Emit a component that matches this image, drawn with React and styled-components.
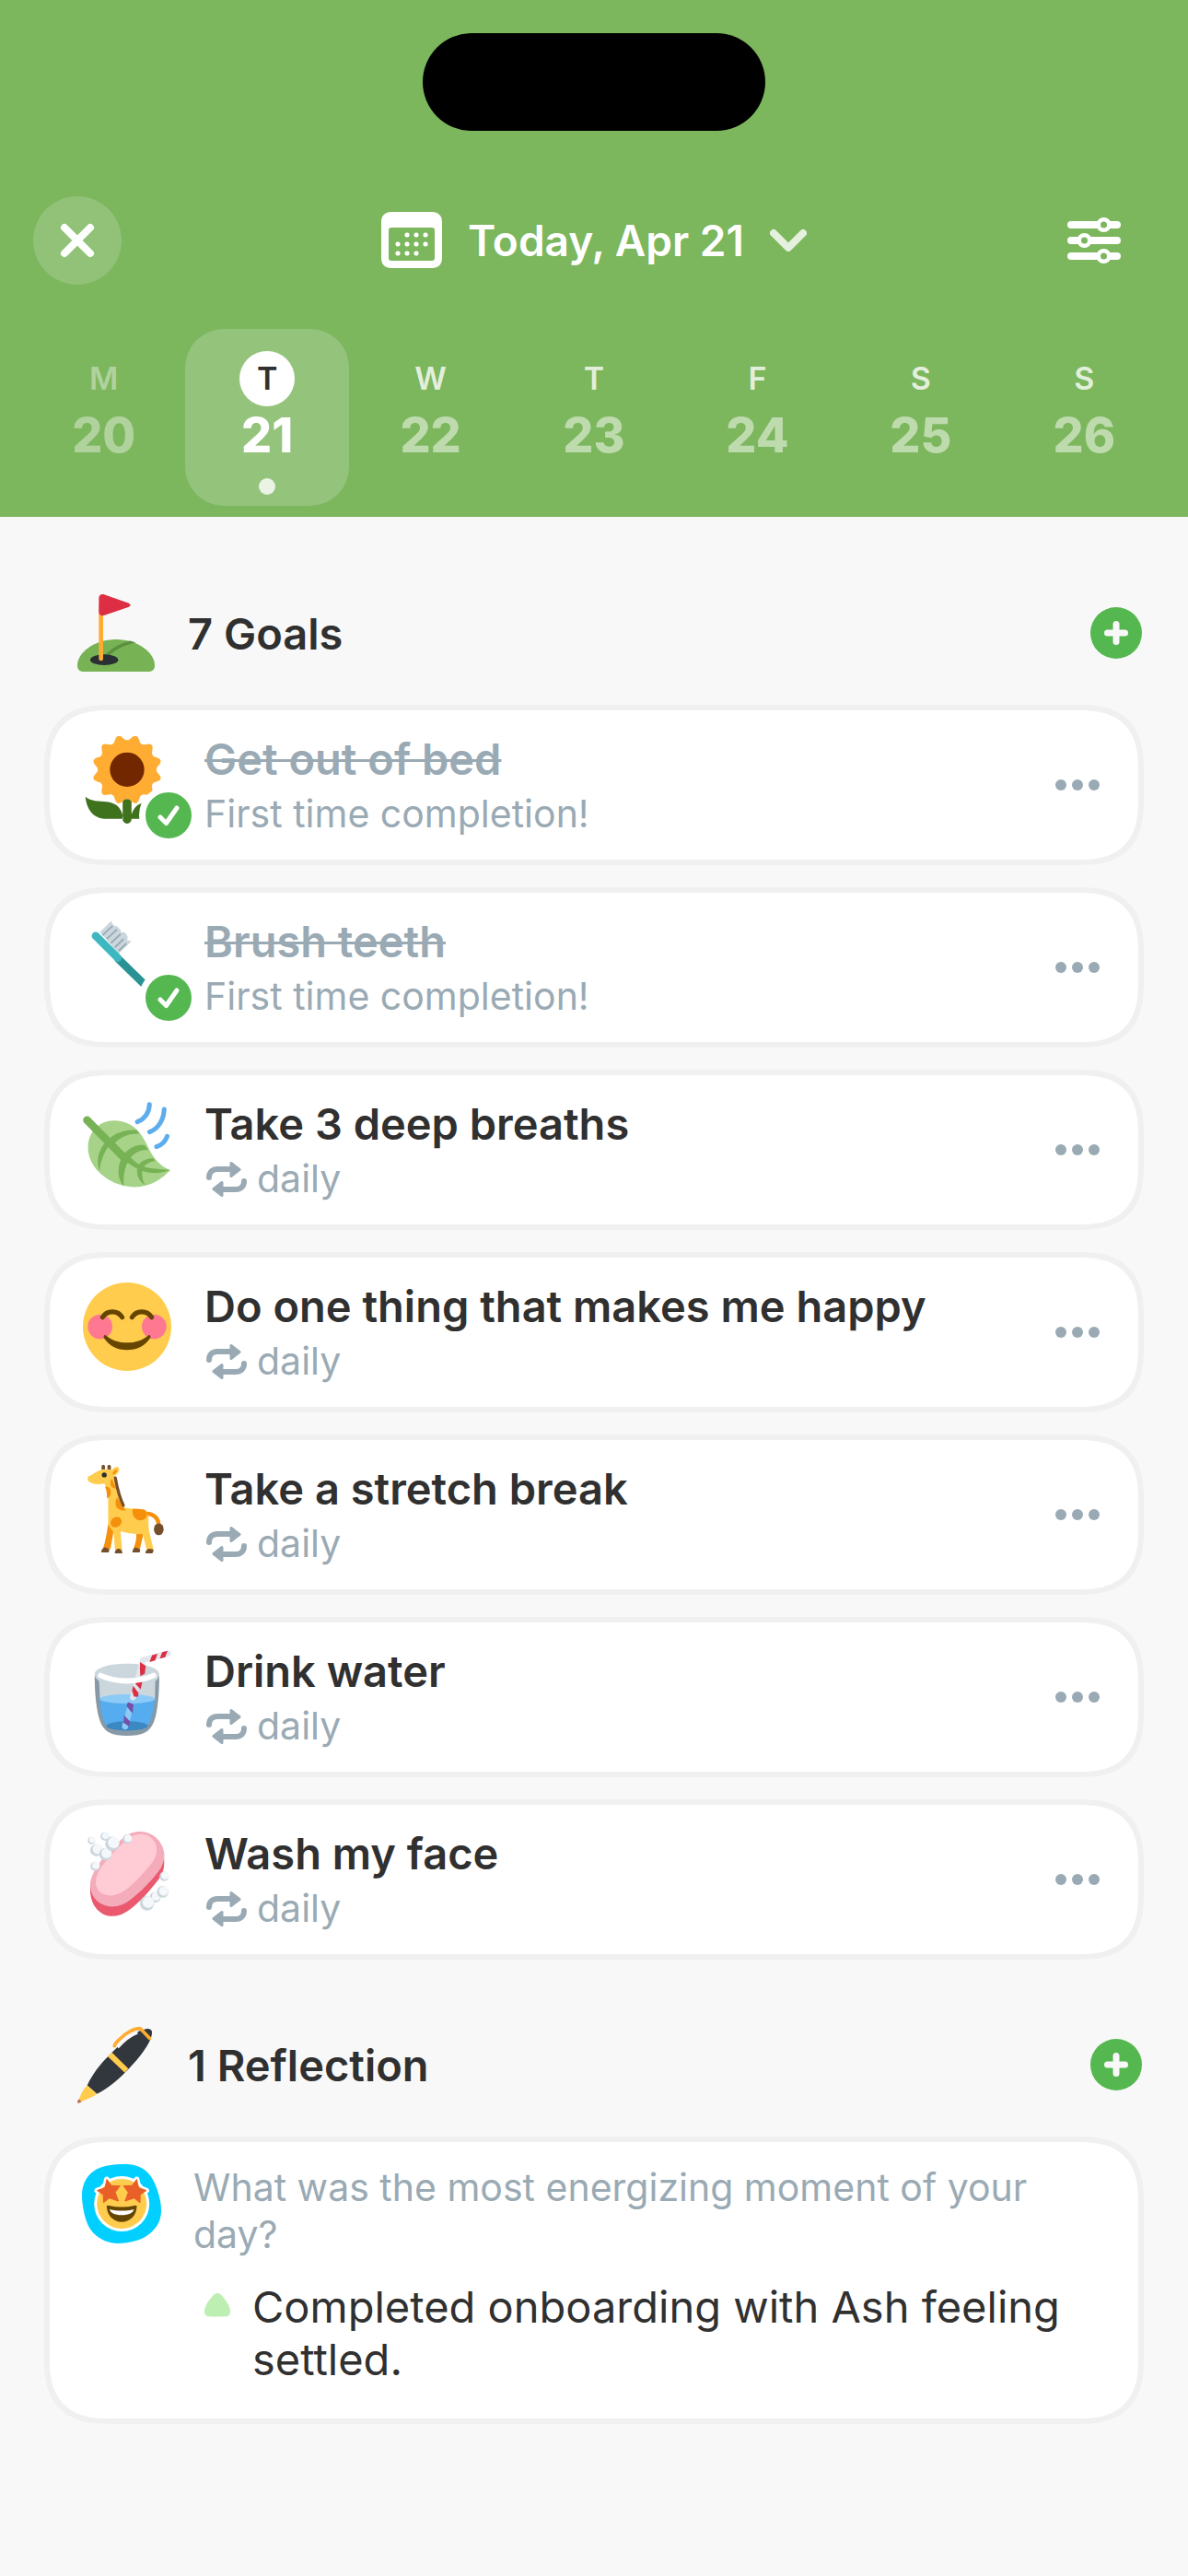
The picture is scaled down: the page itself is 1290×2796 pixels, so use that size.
import React, { useState } from 'react';
import styled, { createGlobalStyle, css } from 'styled-components';

const GlobalStyle = createGlobalStyle`
  * {
    box-sizing: border-box;
  }

  body {
    margin: 0;
    background-color: #f8f8f8;
    color: #303030;
    font-family: Inter, Roboto, 'Liberation Sans', sans-serif;
    font-size: 47px;
  }

  button {
    margin: 0;
    padding: 0;
    border: 0;
    background: none;
    color: inherit;
    font: inherit;
    cursor: pointer;
  }

  svg {
    display: block;
    flex: none;
  }
`;

const Header = styled.header`
  display: flex;
  flex-direction: column;
  padding: 36px 0 12px;
  background-color: #7cb65d;
  color: #ffffff;
`;

const Island = styled.div`
  align-self: center;
  width: 372px;
  height: 106px;
  border-radius: 53px;
  background-color: #000000;
`;

const TopBar = styled.div`
  display: grid;
  grid-template-columns: 1fr auto 1fr;
  align-items: center;
  margin-top: 71px;
  padding: 0 36px;
`;

const RoundButton = styled.button`
  display: flex;
  align-items: center;
  justify-content: center;
  width: 96px;
  height: 96px;
  border-radius: 50%;
  background-color: ${({ $filled }) =>
    $filled ? 'rgba(255, 255, 255, 0.17)' : 'transparent'};
  ${({ $end }) =>
    $end &&
    css`
      justify-self: end;
      margin-right: 18px;
    `}
`;

const DateButton = styled.button`
  display: flex;
  align-items: center;
  gap: 28px;
  font-size: 46px;
  font-weight: 600;
  line-height: 57px;
`;

const Week = styled.nav`
  display: grid;
  grid-template-columns: repeat(7, 1fr);
  margin-top: 48px;
  padding: 0 24px;
`;

const Day = styled.button`
  display: flex;
  flex-direction: column;
  align-items: center;
  height: 192px;
  padding-top: 24px;
  border-radius: 42px;
  background-color: ${({ $selected }) =>
    $selected ? 'rgba(255, 255, 255, 0.19)' : 'transparent'};
  opacity: ${({ $past }) => ($past ? 0.8 : 1)};
`;

const DayLetter = styled.span`
  width: 60px;
  border-radius: 50%;
  font-size: 34px;
  font-weight: 600;
  line-height: 60px;
  color: rgba(255, 255, 255, ${({ $past }) => ($past ? 0.5 : 0.8)});
  ${({ $selected }) =>
    $selected &&
    css`
      background-color: #ffffff;
      color: #303030;
    `}
`;

const DayNumber = styled.span`
  font-size: 52px;
  font-weight: 800;
  line-height: 64px;
  color: ${({ $selected }) =>
    $selected ? '#ffffff' : 'rgba(255, 255, 255, 0.5)'};
`;

const DayDot = styled.span`
  width: 18px;
  height: 18px;
  margin-top: 14px;
  border-radius: 50%;
  background-color: rgba(255, 255, 255, 0.8);
`;

const Main = styled.main`
  display: flex;
  flex-direction: column;
  gap: 72px;
  padding: 84px 48px;
`;

const SectionHead = styled.div`
  display: flex;
  align-items: center;
  gap: 36px;
  margin-bottom: 36px;
  padding: 0 2px 0 36px;
`;

const SectionTitle = styled.h2`
  flex: 1;
  margin: 0;
  font-size: 47px;
  font-weight: 600;
  line-height: 57px;
`;

const AddButton = styled.button`
  display: flex;
  align-items: center;
  justify-content: center;
  width: 56px;
  height: 56px;
  border-radius: 50%;
  background-color: #55b750;
`;

const cardShape = css`
  border: 6px solid #f0f0f0;
  border-radius: 56px;
  background-color: #ffffff;

  @supports (corner-shape: squircle) {
    border-radius: 72px;
    corner-shape: superellipse(1.4);
  }
`;

const GoalList = styled.ul`
  display: flex;
  flex-direction: column;
  gap: 24px;
  margin: 0;
  padding: 0;
  list-style: none;
`;

const GoalCard = styled.li`
  display: flex;
  align-items: flex-start;
  gap: 36px;
  min-height: 174px;
  padding: 24px 36px;
  ${cardShape}
`;

const GoalIcon = styled.div`
  position: relative;
  padding-top: 3px;
`;

const DoneBadge = styled.span`
  position: absolute;
  left: 61px;
  top: 58px;
  display: flex;
  align-items: center;
  justify-content: center;
  width: 64px;
  height: 64px;
  border: 7px solid #ffffff;
  border-radius: 50%;
  background-color: #55b750;
`;

const GoalText = styled.div`
  display: flex;
  flex: 1;
  flex-direction: column;
  gap: 6px;
`;

const GoalTitle = styled.h3`
  margin: 0;
  font-size: 47px;
  font-weight: 600;
  line-height: 57px;
  ${({ $done }) =>
    $done &&
    css`
      color: #9aaab4;
      text-decoration: line-through;
      text-decoration-thickness: 3px;
    `}
`;

const GoalNote = styled.p`
  display: flex;
  align-items: center;
  gap: 9px;
  margin: 0;
  color: #9aaab4;
  font-size: 41px;
  line-height: 51px;
`;

const MoreButton = styled.button`
  display: flex;
  align-self: center;
  gap: 6px;
  padding: 24px 6px;
`;

const MoreDot = styled.span`
  width: 12px;
  height: 12px;
  border-radius: 50%;
  background-color: #9aaab4;
`;

const ReflectionCard = styled.article`
  display: flex;
  align-items: flex-start;
  gap: 35px;
  padding: 24px 36px 36px 35px;
  ${cardShape}
`;

const ReflectionBody = styled.div`
  flex: 1;
`;

const Question = styled.h3`
  margin: 0;
  color: #9aaab4;
  font-size: 41px;
  font-weight: 400;
  line-height: 51px;
`;

const Answers = styled.ul`
  margin: 24px 0 0;
  padding: 0 0 0 12px;
  list-style: none;
`;

const Answer = styled.li`
  display: flex;
  align-items: flex-start;
  gap: 24px;
  line-height: 57px;
`;

const Bullet = styled.svg`
  margin-top: 14px;
`;

const CloseIcon = () => (
  <svg width="38" height="38" viewBox="0 0 38 38" stroke="#fff" strokeWidth="8" strokeLinecap="round">
    <path d="M5 5l28 28M33 5L5 33" />
  </svg>
);

const CalendarIcon = () => (
  <svg width="66" height="62" viewBox="0 0 66 62">
    <path
      fill="#fff"
      fillRule="evenodd"
      d="M11 0h44c7 0 11 4 11 11v39c0 7-4 11-11 11H11C4 61 0 57 0 50V11C0 4 4 0 11 0zM11 17c-2 0-3 1-3 3v30c0 2 1 3 3 3h44c2 0 3-1 3-3V20c0-2-1-3-3-3z"
    />
    {[
      [28, 25], [38, 25], [48, 25],
      [18, 35], [28, 35], [38, 35], [48, 35],
      [18, 45], [28, 45], [38, 45]
    ].map(([x, y]) => (
      <rect key={`${x}-${y}`} x={x - 2.5} y={y - 2.5} width="5" height="5" rx="2" fill="#fff" />
    ))}
  </svg>
);

const ChevronIcon = () => (
  <svg width="40" height="26" viewBox="0 0 40 26" fill="none" stroke="#fff" strokeOpacity="0.8" strokeWidth="8" strokeLinecap="round" strokeLinejoin="round">
    <path d="M4 5l16 16L36 5" />
  </svg>
);

const SlidersIcon = () => (
  <svg width="58" height="52" viewBox="0 0 58 52">
    <path d="M4 9h50M4 26h50M4 43h50" stroke="#fff" strokeWidth="8" strokeLinecap="round" />
    <g fill="#7cb65d" stroke="#fff" strokeWidth="4.6">
      <circle cx="39.500" cy="9" r="5.800" />
      <circle cx="18.500" cy="26" r="5.800" />
      <circle cx="39.500" cy="43" r="5.800" />
    </g>
  </svg>
);

const PlusIcon = () => (
  <svg width="26" height="26" viewBox="0 0 26 26" stroke="#f8f8f8" strokeWidth="7" strokeLinecap="round">
    <path d="M13 3.500v19M3.500 13h19" />
  </svg>
);

const CheckIcon = () => (
  <svg width="24" height="24" viewBox="0 0 24 24" fill="none" stroke="#fff" strokeWidth="5" strokeLinecap="round" strokeLinejoin="round">
    <path d="M3 14l6.500 6.500L21 4" />
  </svg>
);

const RepeatIcon = () => (
  <svg width="48" height="40" viewBox="0 0 48 40" fill="#9aaab4">
    <g fill="none" stroke="#9aaab4" strokeWidth="6" strokeLinecap="round">
      <path d="M5 18c0-6 4-9 9-9h16" />
      <path d="M43 22c0 6-4 9-9 9H20" />
    </g>
    <path strokeLinejoin="round" stroke="#9aaab4" strokeWidth="3" d="M29 2.500l9 7-9 7zM19 23.500l-9 7 9 7z" />
  </svg>
);

const Emoji = ({ size = 96, children }) => (
  <svg width={size} height={size} viewBox="0 0 36 36" aria-hidden="true">
    {children}
  </svg>
);

const GolfFlag = () => (
  <Emoji size={84}>
    <path fill="#77B255" d="M18 21c10.500 0 18 6.500 18 12 0 2-1 3-3 3H3c-2 0-3-1-3-3 0-5.500 7.500-12 18-12z" />
    <path fill="#5C913B" d="M12 29.500c2.500-4 8-6.700 12.500-7.900l2.700.9C22 23.500 16.500 26 13 30.500z" />
    <ellipse cx="12.500" cy="30.500" rx="6.500" ry="2.500" fill="#292F33" />
    <path fill="#FFAC33" d="M10 5h2v25a1 1 0 0 1-2 0z" />
    <path fill="#DD2E44" d="M10 1.800C10 .4 11.300-.3 12.700.2l11 3.900c1.300.5 1.300 1.400 0 1.900l-11 3.800c-1.400.5-2.700-.1-2.700-1.500z" />
  </Emoji>
);

const Sunflower = () => (
  <Emoji>
    <path fill="#3E721D" d="M16.200 26h3.600v8.200a1.800 1.800 0 0 1-3.600 0zM1 25c.6 5 3 9 8.500 9h7c-.6-4-2.500-6.800-8-7C5 26.800 2.500 26.400 1 25zM35 25c-.6 5-3 9-8.500 9h-7c.6-4 2.500-6.800 8-7 3.500-.2 6-.6 7.500-2z" />
    <g fill="#FFAC33">
      <circle cx="18" cy="14" r="12" />
      {[15, 45, 75, 105, 135, 165, 195, 225, 255, 285, 315, 345].map(angle => (
        <path key={angle} transform={`rotate(${angle} 18 14)`} d="M14.700 3c.8-.4 1.600-2 2.300-2.700.6-.6 1.400-.6 2 0 .7.700 1.500 2.300 2.300 2.700L20 8h-4z" />
      ))}
    </g>
    <circle cx="18" cy="14" r="7" fill="#732700" />
  </Emoji>
);

const Toothbrush = () => (
  <Emoji>
    <path fill="#CCD6DD" d="M6.900 5.900l4.600-4.600 1 2c1-.2 1.900.3 2.300 1.300.8.2.8.900.5 1.600 1.200-.6 2.200-.2 2.500.8.6.5.4 1.300.2 2.200l1.800.4-5.200 5z" />
    <path stroke="#9AAAB4" strokeWidth=".7" strokeLinecap="round" d="M8.200 7l3.700-3.500M9.900 8.500L13.700 5M11.600 10.200l3.600-3.400M13.200 11.900l3.200-3M14.800 13.300l2.700-2.600" />
    <path stroke="#2A9194" strokeWidth="3.200" d="M14 16.400L31 33" />
    <path stroke="#3DB8C1" strokeWidth="3.200" strokeLinecap="round" d="M5.200 7.400l9 9" />
  </Emoji>
);

const Leaf = () => (
  <Emoji>
    <path fill="#A6D388" d="M2.100 18.500C2.500 12.500 7 8.300 12.500 8.300c5.500 0 9 2.500 11.500 6.200 2.400 3.600 3.600 7.600 6.200 10.300 1.800 1.900 3.600 3 5.400 3.700-3 3.300-8 6.900-14.500 6.900C11.500 35.400 1.600 28 2.100 18.500z" />
    <path fill="none" stroke="#77B255" strokeWidth="3.200" strokeLinecap="round" d="M1.700 8.200l9.600 9.700 6.200 6.300" />
    <path fill="#77B255" d="M16 23.500l3-.8c2 2.600 4.500 4.400 8 5 3 .5 6 .6 8.600.8-3.500 1.500-8.600 1.600-12 .1-3-1.300-5.500-3-7.600-5.100zM10.500 16c3-2.900 8-4.300 11.600-3.600l1 1.300c-4.600-.3-8.500 1.500-11 4.800l-1.300-.2c-2.500 3.500-3.700 7-3.900 10.500-1.700-3.400-1-9 3.600-12.800zM16.500 22.300c2.500-3.200 6.200-4.500 8.700-3.800l1.500 1.800c-3.500-.2-6.500 1.500-8.300 4.600-1.700 3.500-2 6.800-1.700 10.200-2.800-3-3-8.500-.2-12.800zM22.400 26.500c1.600-2 4.700-3.200 6.400-2.700l.6 1c-2.200.2-4 1.300-5 2.800-.6 2.600-.2 4.900.9 7-2.900-1.700-3.800-5-2.900-8.100z" />
    <g fill="none" stroke="#5DADEC" strokeWidth="1.900" strokeLinecap="round">
      <path d="M27.100 1.800c0 3.200-2 6-4.900 7.100" />
      <path d="M33.100 3.800c-.2 4.400-2.500 7.900-5.900 9.200" />
      <path d="M34.300 14.800c-.7 2-2.200 3.500-4.300 4.200" />
    </g>
  </Emoji>
);

const Smile = () => (
  <Emoji>
    <circle cx="18" cy="18" r="18" fill="#FFCC4D" />
    <circle cx="7" cy="18" r="5" fill="#FF7892" />
    <circle cx="29" cy="18" r="5" fill="#FF7892" />
    <path fill="#664500" d="M8.700 21.500c-.4.500-.3.900 0 1.300 2 3 5.200 4.700 9.300 4.700s7.300-1.700 9.300-4.700c.3-.4.400-.8 0-1.300-.3-.2-.7 0-1 .3-2.100 1.700-4.900 2.700-8.300 2.700s-6.200-1-8.300-2.700c-.3-.3-.7-.5-1-.3z" />
    <path fill="none" stroke="#664500" strokeWidth="1.900" strokeLinecap="round" d="M8 14.200c1.700-3 6.300-3 8 0M20 14.200c1.700-3 6.300-3 8 0" />
  </Emoji>
);

const Giraffe = () => (
  <Emoji>
    <path fill="#F4900C" d="M10.300 24l2.200 3-1.300 7.300H8.100c1.200-3.300 1.600-6.500 2.200-10.300zM21.700 27h3.200l-1.700 7.300h-2.700c1-2.300 1.500-4.600 1.200-7.300z" />
    <path fill="none" stroke="#F4900C" strokeWidth="1.700" d="M25 20c3.300-.5 5.600 1.200 5.900 4.500" />
    <ellipse cx="30.900" cy="26.200" rx="2" ry="2.400" fill="#754F2D" />
    <path fill="#FFCC4D" d="M2.300 4.700c2-.7 3.800-2.700 6.200-2.900 1.300-.1 2.500.3 3.500.2.500-1 1.800-1.300 2.500-1 .6.500.2 2.600-1.600 3.300l4 13.100c2.800.4 6 .4 8 .9 1.200.7 1.700 1.800 1.800 3 0 3 0 5 .6 7l1.500 6.400H26l-1.600-6.500c-3.500 0-6-.4-9.100-1.200l.7 7.700h-2.900l-.6-7.300-2.200-3v-10c0-2.500-.3-4.900-1.500-6.700-1.200 0-2.900.4-4.400 0C3 7.200 2 6.800 2 6c-.1-.6 0-1.100.3-1.300z" />
    <path fill="#F4900C" d="M12 3.900c.2-1 .8-1.900 2-2.100 0 1-.5 2-2 2.100zM11.900 5.700l1.500 4c-1.200-.2-2.200-1-2.200-2.200 0-.9.200-1.500.7-1.800zM9 8.800c1.500-.2 2.400.8 2.400 2.400 0 1.200-.7 2.200-1.600 2.400 0-1.800-.1-3.300-.8-4.800zM14 13.200l2.700 4.300c.4.500.7.900.9 1-1.700.4-4.300-.6-4.300-2.700 0-1 .2-2 .7-2.600zM20.200 18c1.700-.2 3.600 0 5 .3.600.5.900 1.100 1 1.700 0 1.600-1.300 2.600-2.700 2.600-2 0-3.600-1.800-3.300-4.600z" />
    <ellipse cx="13.500" cy="23.300" rx="2.400" ry="2" transform="rotate(-35 13.500 23.300)" fill="#F4900C" />
    <path fill="none" stroke="#754F2D" strokeWidth="1.200" strokeLinecap="round" d="M13.200 5.300c.8 4.300 1.700 8 3.300 11.200" />
    <path fill="#754F2D" d="M7.600 1.900V.7c0-1 1.400-1 1.400 0v1.100zM10 1.800V.7c0-1 1.400-1 1.400 0V2zM7.500 35.600c0-1 .6-2 1.800-2l1.500.8-.3 1.200zM13 36c0-1 .6-1.900 1.500-1.900 1 0 1.600.9 1.600 1.900zM20.200 35.600c0-1 .6-2 1.500-1.900l1.700.7-.3 1.200zM25.500 36c0-1 .6-1.900 1.600-1.900s1.700.3 1.700.8l-.5 1.100z" />
    <circle cx="8.700" cy="4.100" r="1" fill="#292F33" />
  </Emoji>
);

const WaterGlass = () => (
  <Emoji>
    <path fill="#8899A6" d="M4.800 11.500h26.300c0 7.500-.6 14.500-2.200 18.900C27.300 34.600 24 36 18 36S8.700 34.600 7.100 30.400C5.500 26 4.800 19 4.800 11.500z" />
    <path fill="#CCD6DD" d="M4.800 11C4.800 8.500 10.500 6.700 18 6.700S31.100 8.500 31.100 11c0 1-.5 2-1.600 2.700l-.2 8H7l-.4-8C5.400 13 4.800 12 4.800 11z" />
    <path fill="#55ACEE" d="M6.900 21h22.400c-.4 3.600-.9 6.700-1.800 8.800-1.400 3.200-4 4-9.500 4s-8.100-.8-9.500-4C7.600 27.700 7.100 24.600 6.900 21z" />
    <ellipse cx="18.100" cy="21" rx="11.200" ry="1.900" fill="#8CCAF7" />
    <ellipse cx="18" cy="32" rx="8.400" ry="1.900" fill="#3B88C3" />
    <path fill="none" stroke="#8CCAF7" strokeWidth="2.500" strokeLinecap="round" d="M17.200 32.200l3-11.200" />
    <path fill="none" stroke="#E1E8ED" strokeWidth="2.400" strokeLinecap="round" strokeLinejoin="round" d="M20.400 20.300l4-15.100 10.300-2.700" />
    <path fill="#7450A8" d="M18.300 22.300l2.400.9-.5 3.700-2.400-2.900zM16.800 27.700l2.500 2.600-.6 1.900-2.200-1.500z" />
    <path fill="#DD2E44" d="M20 17.600l.5-1.900 2.200 3-.3 1.500-1.600-.1zM22 13.300l2.400-.2-.9 4-2.100-2.200zM23.300 6l2.300 1.600-.4 3.100-1.800 1-.2-2.700zM28.200 3.200l2.200-.6-1 2.700-2.300.7zM32.300 2l2.200-.6-1 2.600-2.200.6z" />
    <path fill="none" stroke="#fff" strokeWidth="2.200" strokeLinecap="round" d="M7.200 11.500c6.500 2.900 15.100 2.900 21.600 0" />
  </Emoji>
);

const soapBubbles = [
  [3.5, 4.4, 1.5], [9, 2.7, 1.8], [5.5, 8.3, 2.5], [9.2, 10, 2.6], [12, 5.7, 2.9], [18.1, 3.8, 1.9],
  [5, 14.9, 1.9], [33.1, 19, 1.9], [29.4, 27.5, 2.2], [32.5, 25.3, 2.4], [26.1, 30, 2.9]
];

const Soap = () => (
  <Emoji>
    <path fill="#EA596E" d="M3.100 21.500l30-9.500c.1 3.600-.2 5.600-2.500 8.500-3 3.900-7.600 9.200-11.800 12.200-3.500 2.600-7.500 3.300-10.800 1.500-3.700-2.200-5.600-6.300-4.900-12.700z" />
    <path fill="#F4ABBA" d="M16.200 3.500c4.600-4 10.600-3.400 14.300.4 3.500 3.900 3.500 9 .3 13.100-2.700 3.500-7.200 8.300-11.200 11.300-3.700 2.900-8 3.900-11.700 2.100-4-2-5.600-6-4.600-10.200C5 14.500 10 9 16.200 3.500z" />
    <path fill="#FFCCD6" d="M17.300 4.700c4.300-3.900 8.500-3.600 11.200-.7 2.400 2.700 2 6.500-.7 9.900-2.500 3.200-6 7.100-9.400 9.800-3.500 2.900-7.500 4-10.500 2.300-2.800-1.600-3.400-4.800-1.700-8.500C8 14 12 9.300 17.300 4.700z" />
    {soapBubbles.map(([x, y, r]) => (
      <g key={`${x}-${y}`}>
        <circle cx={x} cy={y} r={r} fill="#CCD6DD" />
        <circle cx={x + r * 0.18} cy={y - r * 0.18} r={r * 0.8} fill="#F5F8FA" />
      </g>
    ))}
  </Emoji>
);

const Pen = () => (
  <Emoji size={84}>
    <path fill="#31373D" d="M32.300 1.300c1.200-.1 2.300.4 2.400 1.300.1 1.400-.3 2.900-1 4.300-1.500 3.200-4.600 7.700-9.300 12.500-4.600 4.900-9.800 9.600-15.300 12.200l-4.500-4c2.300-5 6-9.900 10.200-13.900 4.200-4.400 10-9.500 14.300-11.400z" />
    <path fill="#FFCC4D" d="M16.100 12.300l7.600 7.500-1.600 2-7.900-7.500zM4.600 27.600l4.600 4c-2.500 1.700-5.300 2.900-8 3.700L.6 34.700c.8-2.700 2-5.200 4-7.100z" />
    <path fill="#C1694F" d="M.7 34l1.300 1.300c-.6.400-1.400.7-2 .5 0-.6.300-1.200.7-1.800z" />
    <path fill="none" stroke="#F8F8F8" strokeWidth="1.200" d="M18.800 10c2.300-2.600 5.500-5.400 9.200-6.900" />
    <path fill="none" stroke="#FFAC33" strokeWidth="1.600" strokeLinecap="round" strokeLinejoin="round" d="M17.300 9.300c0-.9.900-1.700 2-2.800 1.400-1.500 3-2.900 5-3.900 1.700-1 3.400-1.500 4.900-1.500l4.400 4.600" />
  </Emoji>
);

const star = 'M27 16.500l5 6.800 9.300.3-5.200 7 3.500 9.400-9.900-3.200-6.300 5-.2-8.600-6.700-4.600 8.500-3z';

const StarStruckBadge = () => (
  <svg width="86" height="86" viewBox="0 0 86 86" aria-hidden="true">
    <path fill="#00CFFF" d="M47.700 0C57 0 65 3 71 8.700 77 15 80 22 82.500 30 85 38 86 44 86 50c0 8-2 15-8 21-5 6-11 9.500-19 12-7 2-14 3-20 3-10 0-19-4-26.300-11C6 68 4 60 2 51.500.7 45 0 40 0 34c0-9 3-17.500 9.300-23.700C15 5 21 3 28 1.500 35 .4 41 0 47.700 0z" />
    <circle cx="43.200" cy="43" r="30" fill="#fff" />
    <g fill="#fff" stroke="#fff" strokeWidth="6" strokeLinejoin="round">
      <path d={star} />
      <path d={star} transform="matrix(-1 0 0 1 86.400 0)" />
    </g>
    <circle cx="43.200" cy="43" r="27" fill="#FFCC4D" />
    <g fill="#E95F28" stroke="#E95F28" strokeWidth="1" strokeLinejoin="round">
      <path d={star} />
      <path d={star} transform="matrix(-1 0 0 1 86.400 0)" />
    </g>
    <path fill="#664500" d="M27 47c-1-2 1-2.500 2.500-2 9 2 18.400 2 27.400 0 1.500-.5 3.500 0 2.500 2-.5 9-7.500 15.700-16.200 15.700S27.500 56 27 47z" />
    <path fill="#fff" d="M30 49c8.500 2 17.900 2 26.400 0-.5 3.500-5.500 6.300-13.200 6.300S30.500 52.500 30 49z" />
  </svg>
);

const days = [
  { letter: 'M', number: 20, past: true },
  { letter: 'T', number: 21 },
  { letter: 'W', number: 22 },
  { letter: 'T', number: 23 },
  { letter: 'F', number: 24 },
  { letter: 'S', number: 25 },
  { letter: 'S', number: 26 }
];

const goals = [
  { title: 'Get out of bed', Icon: Sunflower, done: true },
  { title: 'Brush teeth', Icon: Toothbrush, done: true },
  { title: 'Take 3 deep breaths', Icon: Leaf },
  { title: 'Do one thing that makes me happy', Icon: Smile },
  { title: 'Take a stretch break', Icon: Giraffe },
  { title: 'Drink water', Icon: WaterGlass },
  { title: 'Wash my face', Icon: Soap }
];

const Goal = ({ title, Icon, done }) => (
  <GoalCard>
    <GoalIcon>
      <Icon />
      {done && (
        <DoneBadge>
          <CheckIcon />
        </DoneBadge>
      )}
    </GoalIcon>
    <GoalText>
      <GoalTitle $done={done}>{title}</GoalTitle>
      {done ? (
        <GoalNote>First time completion!</GoalNote>
      ) : (
        <GoalNote>
          <RepeatIcon />
          daily
        </GoalNote>
      )}
    </GoalText>
    <MoreButton aria-label={`More options for ${title}`}>
      <MoreDot />
      <MoreDot />
      <MoreDot />
    </MoreButton>
  </GoalCard>
);

const App = () => {
  const [selected, setSelected] = useState(21);

  return (
    <>
      <GlobalStyle />
      <Header>
        <Island />
        <TopBar>
          <RoundButton $filled aria-label="Close">
            <CloseIcon />
          </RoundButton>
          <DateButton>
            <CalendarIcon />
            Today, Apr 21
            <ChevronIcon />
          </DateButton>
          <RoundButton $end aria-label="Filters">
            <SlidersIcon />
          </RoundButton>
        </TopBar>
        <Week aria-label="Week">
          {days.map(({ letter, number, past }) => {
            const isSelected = number === selected;
            return (
              <Day
                key={number}
                $selected={isSelected}
                $past={past}
                onClick={() => setSelected(number)}
              >
                <DayLetter $selected={isSelected} $past={past}>
                  {letter}
                </DayLetter>
                <DayNumber $selected={isSelected}>{number}</DayNumber>
                {isSelected && <DayDot />}
              </Day>
            );
          })}
        </Week>
      </Header>
      <Main>
        <section>
          <SectionHead>
            <GolfFlag />
            <SectionTitle>{goals.length} Goals</SectionTitle>
            <AddButton aria-label="Add goal">
              <PlusIcon />
            </AddButton>
          </SectionHead>
          <GoalList>
            {goals.map(goal => (
              <Goal key={goal.title} {...goal} />
            ))}
          </GoalList>
        </section>
        <section>
          <SectionHead>
            <Pen />
            <SectionTitle>1 Reflection</SectionTitle>
            <AddButton aria-label="Add reflection">
              <PlusIcon />
            </AddButton>
          </SectionHead>
          <ReflectionCard>
            <StarStruckBadge />
            <ReflectionBody>
              <Question>What was the most energizing moment of your day?</Question>
              <Answers>
                <Answer>
                  <Bullet width="28" height="26" viewBox="0 0 28 26">
                    <path fill="#BDEFB3" d="M14 0c2 0 4 1.500 6 4 4 5 7 9 8 14 .5 4-1 7-4 7.300-7 .4-13 .4-20 0C1 25 -.5 22 0 18 1 13 4 9 8 4c2-2.500 4-4 6-4z" />
                  </Bullet>
                  Completed onboarding with Ash feeling settled.
                </Answer>
              </Answers>
            </ReflectionBody>
          </ReflectionCard>
        </section>
      </Main>
    </>
  );
};

export default App;
